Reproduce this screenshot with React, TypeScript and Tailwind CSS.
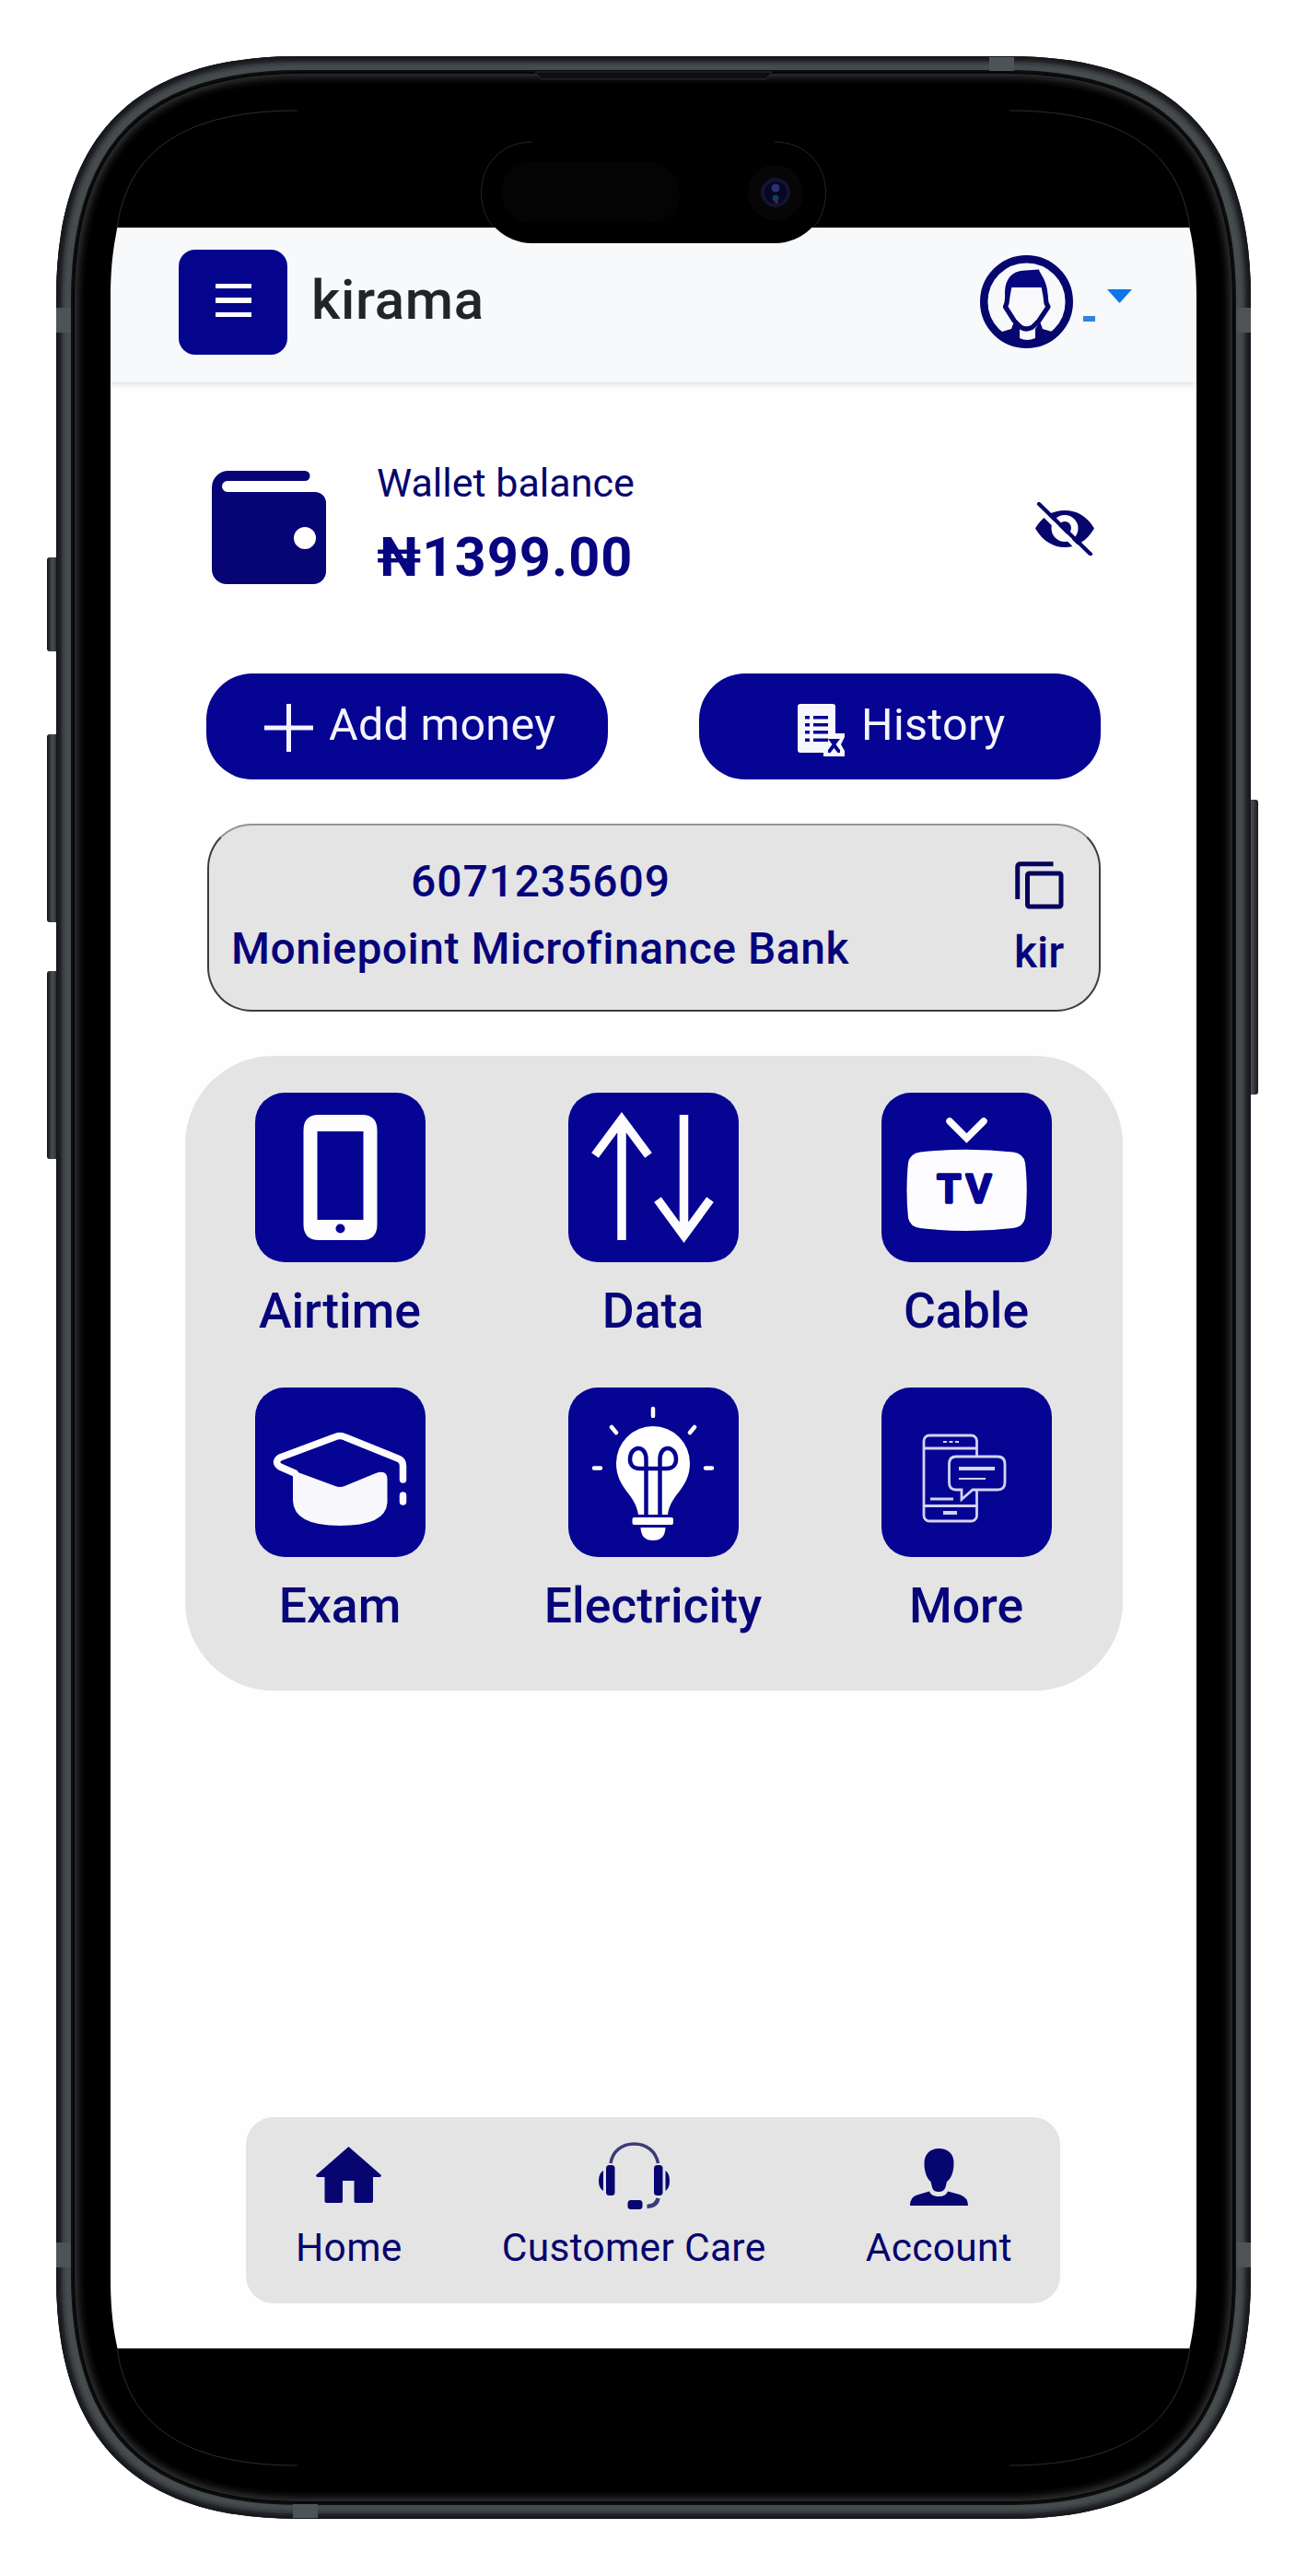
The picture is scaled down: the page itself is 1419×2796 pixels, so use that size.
import type { ReactNode } from "react";

const NAVY = "#060492";

/** Continuous-curvature rounded rectangle: l = corner length, c = bezier handle offset. */
function squircle(x0: number, y0: number, x1: number, y1: number, l: number, c: number) {
  return [
    `M${x0 + l} ${y0}`,
    `H${x1 - l}`,
    `C${x1 - c} ${y0} ${x1} ${y0 + c} ${x1} ${y0 + l}`,
    `V${y1 - l}`,
    `C${x1} ${y1 - c} ${x1 - c} ${y1} ${x1 - l} ${y1}`,
    `H${x0 + l}`,
    `C${x0 + c} ${y1} ${x0} ${y1 - c} ${x0} ${y1 - l}`,
    `V${y0 + l}`,
    `C${x0} ${y0 + c} ${x0 + c} ${y0} ${x0 + l} ${y0}Z`,
  ].join(" ");
}

const BODY = squircle(61, 61, 1358, 2734, 262, 86);
const INNER = squircle(79, 78, 1340, 2717, 248, 79);
const SCREEN = squircle(120, 120, 1299, 2676, 203, 61);

function PhoneFrame() {
  return (
    <svg className="pointer-events-none absolute inset-0" width="1419" height="2796" viewBox="0 0 1419 2796" fill="none">
      <defs>
        <clipPath id="body"><path d={BODY} /></clipPath>
        <clipPath id="ring"><path d={`${INNER} ${SCREEN}`} clipRule="evenodd" /></clipPath>
        <filter id="soft" x="-5%" y="-5%" width="110%" height="110%"><feGaussianBlur stdDeviation="5" /></filter>
        <filter id="edge" x="-5%" y="-5%" width="110%" height="110%"><feGaussianBlur stdDeviation="2.5" /></filter>
        <linearGradient id="btn" x1="0" x2="1"><stop offset="0" stopColor="#111314" /><stop offset=".4" stopColor="#4a4e50" /><stop offset="1" stopColor="#17191a" /></linearGradient>
      </defs>
      {[[605, 102], [797, 204], [1054, 204]].map(([y, h]) => (
        <rect key={y} x="51" y={y} width="14" height={h} rx="3" fill="url(#btn)" />
      ))}
      <rect x="1354" y="868" width="12" height="320" rx="3" fill="url(#btn)" />
      <path d={`${BODY} ${SCREEN}`} fill="#000" fillRule="evenodd" />
      <g clipPath="url(#body)">
        <path d={`${BODY} ${INNER}`} fill="#464b4d" fillRule="evenodd" />
        <path d={BODY} stroke="#15181a" strokeWidth="12" filter="url(#edge)" />
        <path d={INNER} stroke="#0c0d0e" strokeWidth="4" />
      </g>
      <g fill="#4e5455">
        <rect x="61" y="334" width="16" height="27" />
        <rect x="1342" y="334" width="16" height="27" />
        <rect x="61" y="2434" width="16" height="27" />
        <rect x="1342" y="2434" width="16" height="27" />
        <rect x="1074" y="62" width="27" height="15" />
        <rect x="318" y="2718" width="27" height="15" />
      </g>
      <g clipPath="url(#ring)">
        <path d={INNER} stroke="#3a3a3a" strokeWidth="10" filter="url(#soft)" />
        <path d={INNER} stroke="#050505" strokeWidth="4" />
      </g>
      <path d="M581 78L587 86H832L838 78Z" fill="#0e0e0e" stroke="#2c2c2c" />
      <g stroke="#2e2e2e" strokeWidth="1">
        <path d="M127 247C137 179 181 120 323 120" />
        <path d="M1292 247C1282 179 1238 120 1096 120" />
        <path d="M127 2549C137 2617 181 2676 323 2676" />
        <path d="M1292 2549C1282 2617 1238 2676 1096 2676" />
      </g>
      <rect x="522.5" y="154" width="374" height="110" rx="55" fill="#000" />
      <path d="M578 154C545 154 522.5 178 522.5 209C522.5 225 528 237 535 246M841 154C874 154 896.5 178 896.5 209C896.5 225 891 237 884 246" stroke="#262626" />
      <rect x="544" y="176" width="194" height="66" rx="33" fill="#040404" />
      <circle cx="842" cy="209" r="30" fill="#080509" />
      <circle cx="842" cy="209" r="16" fill="#14142e" />
      <circle cx="842" cy="209" r="12" fill="#060625" />
      <circle cx="842" cy="204" r="4.5" fill="#2c2f70" />
      <circle cx="842" cy="215" r="3.5" fill="#12404c" />
      <circle cx="843" cy="219" r="2" fill="#4d1a5c" />
    </svg>
  );
}

function AvatarIcon() {
  return (
    <svg width="101" height="101" viewBox="0 0 101 101" fill="none">
      <defs><clipPath id="avatar"><circle cx="50.5" cy="50.5" r="48" /></clipPath></defs>
      <g clipPath="url(#avatar)">
        <path d="M14 90L24 83L34 80L37 72L43 80V90C48 92.500 54 92.500 60 90V80L65 72L68 80L78 83L87 90L70 101H30Z" fill="#06066f" />
      </g>
      <path d="M32 33L30 44L29 52L27.500 56L37 71L44 78Q50 82 57 78L64 71L74 56L72 52L71 44L69 33" fill="#fafafd" stroke="#06066f" strokeWidth="5.200" strokeLinejoin="round" />
      <path d="M27.500 48C25 28 33 16.500 50 16.500L64 15.500C65 21 74.500 28 73.500 48L67 35H34Z" fill="#06067e" />
      <circle cx="50.5" cy="50.5" r="46.300" stroke="#06066f" strokeWidth="8.400" />
    </svg>
  );
}

function Header() {
  return (
    <header className="flex h-[168px] shrink-0 items-start bg-[#f8f9fb] pl-[74px] pr-[70px] shadow-[0_2px_6px_rgba(0,0,0,0.14)]">
      <button className="mt-[24px] flex h-[114px] w-[118px] flex-col items-center justify-center gap-[10px] rounded-[18px] bg-[#04048c] pb-[4px]">
        <span className="h-[5.500px] w-[39px] bg-white" />
        <span className="h-[5.500px] w-[39px] bg-white" />
        <span className="h-[5.500px] w-[39px] bg-white" />
      </button>
      <h1 className="ml-[26px] mt-[44px] whitespace-nowrap text-[60px] font-medium leading-[70px] tracking-[0.7px] text-[#212529]">kirama</h1>
      <div className="ml-auto flex items-start">
        <div className="mt-[30px]"><AvatarIcon /></div>
        <span className="ml-[11px] mt-[96px] h-[6px] w-[13px] bg-[#2f86dc]" />
        <svg className="ml-[13px] mt-[67px]" width="27" height="15" viewBox="0 0 27 15"><path d="M0 0H27L13.500 15Z" fill="#0f74ee" /></svg>
      </div>
    </header>
  );
}

function WalletIcon() {
  return (
    <svg width="124" height="123" viewBox="0 0 124 123">
      <path fillRule="evenodd" fill="#070575" d="M18 0H101A5.500 5.500 0 0 1 101 11H17A6 6 0 0 0 17 23H112A12 12 0 0 1 124 35V109A14 14 0 0 1 110 123H16A16 16 0 0 1 0 107V18A18 18 0 0 1 18 0ZM101 61A12 12 0 1 0 101 85A12 12 0 1 0 101 61Z" />
    </svg>
  );
}

function EyeOffIcon() {
  return (
    <svg width="64" height="58" viewBox="0 0 64 58" fill="none">
      <path fillRule="evenodd" fill="#07046c" d="M0 28.500C8 15 19 9 32 9S56 15 64 28.500C56 42 45 49 32 49S8 42 0 28.500ZM32 14A14.500 14.500 0 1 0 32 43A14.500 14.500 0 1 0 32 14Z" />
      <circle cx="32" cy="28" r="7" fill="#07046c" />
      <path d="M0.500 4.500L57 61" stroke="#fdfdfd" strokeWidth="5" />
      <path d="M4 2L60 56.500" stroke="#07046c" strokeWidth="4.200" strokeLinecap="round" />
    </svg>
  );
}

function HistoryIcon() {
  return (
    <svg width="51" height="57" viewBox="0 0 51 57" fill="none">
      <path fill="#f7f7ff" d="M3 0H38Q41 0 41 3V32H51V36L47 44L51 51V57H28V53H3Q0 53 0 50V3Q0 0 3 0Z" />
      <g fill={NAVY}>
        {[13, 21, 29, 37.5].map((y) => (
          <path key={y} d={`M8 ${y}h5v3.500h-5zM17 ${y}h16v3.500h-16z`} />
        ))}
        <path d="M33 38H46L41.500 44L46 50V53H43.500L39.500 48L35.500 53H33V50L37.500 44Z" />
      </g>
    </svg>
  );
}

function Wallet() {
  return (
    <section className="ml-[110px] mt-[84px] flex h-[141px] w-[958px] items-start text-[#07056e]">
      <div className="mt-[12px]"><WalletIcon /></div>
      <div className="ml-[55px] whitespace-nowrap">
        <p className="text-[43px] leading-[50px]">Wallet balance</p>
        <p className="mt-[21px] text-[59.5px] font-bold leading-[70px] tracking-[1px] text-[#070580]">₦1399.00</p>
      </div>
      <div className="ml-auto mt-[46px]"><EyeOffIcon /></div>
    </section>
  );
}

function Actions() {
  return (
    <section className="ml-[104px] mt-[91px] flex w-[971px] justify-between whitespace-nowrap text-[48.5px] leading-[56px] tracking-[0.3px] text-[#f4f4ff]">
      <button className="flex h-[115px] w-[436px] items-center rounded-[50px] bg-[#060492] pb-[4px] pl-[63px]">
        <svg className="mt-[7px]" width="53" height="52" viewBox="0 0 53 52"><path d="M26.500 0V52M0 26H53" stroke="#f4f4ff" strokeWidth="5" /></svg>
        <span className="ml-[17px]">Add money</span>
      </button>
      <button className="flex h-[115px] w-[436px] items-center rounded-[50px] bg-[#060492] pb-[4px] pl-[107px]">
        <span className="mt-[12px]"><HistoryIcon /></span>
        <span className="ml-[18px]">History</span>
      </button>
    </section>
  );
}

function AccountCard() {
  return (
    <section className="ml-[105px] mt-[48px] flex h-[204px] w-[970px] items-start justify-between whitespace-nowrap rounded-[48px] border-2 border-[#3c3c3c] border-t-[#929292] bg-[#e4e4e4] pl-[24px] pr-[38px] text-[48px] font-medium text-[#06047a]">
      <div className="pt-[24px] text-center leading-[73px]">
        <p className="ml-[1px] tracking-[0.9px]">6071235609</p>
        <p className="tracking-[0.5px]">Moniepoint Microfinance Bank</p>
      </div>
      <div className="flex w-[53px] flex-col pt-[39px]">
        <svg width="53" height="52" viewBox="0 0 53 52" fill="none" stroke="#06045e" strokeWidth="5">
          <path d="M2.750 41V6Q2.750 2.750 6 2.750H41.500" />
          <rect x="13.500" y="13" width="36.500" height="36" rx="2" />
        </svg>
        <p className="-ml-[1px] mt-[17px] leading-[60px]">kir</p>
      </div>
    </section>
  );
}

const services: { label: string; icon: ReactNode }[] = [
  {
    label: "Airtime",
    icon: (
      <>
        <path fillRule="evenodd" fill="#fdfdff" d="M69 24H116Q132.500 24 132.500 41V143Q132.500 160 116 160H69Q52.500 160 52.500 143V41Q52.500 24 69 24ZM67.500 42V138H117.500V42Z" />
        <circle cx="92.500" cy="147.500" r="5" fill={NAVY} />
      </>
    ),
  },
  {
    label: "Data",
    icon: <path d="M58 160V28M29 68L58 29L87 68M125.500 24V156M97 116L125.500 155L154 116" stroke="#fdfdff" strokeWidth="9.500" />,
  },
  {
    label: "Cable",
    icon: (
      <>
        <path d="M74 31L92.500 49.500L111 31" stroke="#fdfdff" strokeWidth="7.500" strokeLinecap="round" />
        <path d="M42 64.500Q92.500 59 143 64.500Q154 66 156 76Q159.500 106 156 136Q154 145.500 143 147Q92.500 153 42 147Q31 145.500 29 136Q26 106 29 76Q31 66 42 64.500Z" fill="#fdfdff" />
        <text x="60.500" y="119" fontSize="42" fontWeight="500" letterSpacing="5.500" fill={NAVY} stroke={NAVY} strokeWidth="3.500" strokeLinejoin="round">TV</text>
      </>
    ),
  },
  {
    label: "Exam",
    icon: (
      <>
        <path d="M43 93L27 86Q20 81 27 76L86 54Q92 51 98 54L155 77Q160.500 79 160.500 85V100M160.500 117V124" stroke="#fdfdff" strokeWidth="7.500" strokeLinecap="round" strokeLinejoin="round" />
        <path d="M41 90L87 107Q92 109 97 107L131 93Q143 89 143.500 99V125Q142 150 92 150Q42 150 41 123Z" fill="#f8f8fc" />
      </>
    ),
  },
  {
    label: "Electricity",
    icon: (
      <>
        <path d="M76 138C73 115 52 110 52 82A40 40 0 0 1 132 82C132 110 111 115 108 138Z" fill="#fff" />
        <path d="M84.500 138V78C84.500 61 67 63 67 78C67 84 71 88 77 88H107C113 88 117 84 117 78C117 63 99.500 61 99.500 78V138" stroke={NAVY} strokeWidth="4.500" />
        <rect x="69.500" y="141" width="44.500" height="8" rx="2" fill="#fff" />
        <path d="M78.500 152H105.500Q105 166 92 166Q79 166 78.500 152Z" fill="#fff" />
        <path d="M92 23V31M47 43L52 49M137 43L132 49M28 87.500H35M149 87.500H156" stroke="#fff" strokeWidth="4.500" strokeLinecap="round" />
      </>
    ),
  },
  {
    label: "More",
    icon: (
      <g stroke="#d3d3f2" strokeWidth="2.800">
        <rect x="46" y="52" width="57.500" height="93" rx="6" />
        <path d="M46 66H103M46 128.500H103M53 121H78" />
        <path d="M67 59H84" strokeDasharray="4 2.500" strokeWidth="2" />
        <path d="M67 136H82" strokeWidth="4" />
        <path d="M81 75H126Q134 75 134 83V103Q134 111 126 111H99L87 121.500V111H81Q73.500 111 73.500 103V83Q73.500 75 81 75Z" fill={NAVY} />
        <path d="M84 88H123" strokeWidth="4" />
        <path d="M84 99H113" strokeWidth="2" />
      </g>
    ),
  },
];

function Services() {
  return (
    <section className="ml-[81px] mt-[48px] h-[689px] w-[1018px] rounded-[96px] bg-[#e4e4e4] pt-[40px]">
      <div className="-ml-[2px] grid w-[1020px] grid-cols-3 gap-y-[51px]">
        {services.map((s) => (
          <div key={s.label} className="flex flex-col items-center">
            <div className="h-[184px] w-[185px] overflow-hidden rounded-[32px] bg-[#060492]">
              <svg width="185" height="184" viewBox="0 0 185 184" fill="none">{s.icon}</svg>
            </div>
            <p className="mt-[21px] whitespace-nowrap text-[53.5px] font-medium leading-[64px] text-[#07057a]">{s.label}</p>
          </div>
        ))}
      </div>
    </section>
  );
}

function NavItem({ label, children }: { label: string; children: ReactNode }) {
  return (
    <div className="flex flex-col items-center whitespace-nowrap">
      <div className="h-[117px]">{children}</div>
      <p className="text-[42.5px] leading-[50px] tracking-[0.3px]">{label}</p>
    </div>
  );
}

function BottomNav() {
  return (
    <nav className="ml-[147px] mt-[463px] flex h-[202px] w-[884px] items-start justify-between rounded-[30px] bg-[#e4e4e4] pl-[54px] pr-[52px] text-[#06056e]">
      <NavItem label="Home">
        <svg className="mt-[32px]" width="71" height="62" viewBox="0 0 71 62" fill="#070570">
          <path d="M35.500 0L71 31Q71 33 69 33H62V59Q62 61 60 61H43Q41.500 61 41.500 59V37H29V59Q29 61 27.500 61H11.500Q9.500 61 9.500 59V33H2Q0 33 0 31Z" />
        </svg>
      </NavItem>
      <NavItem label="Customer Care">
        <svg className="mt-[27px]" width="77" height="74" viewBox="0 0 77 74" fill="none">
          <path d="M13 23C15 10 25 2 38.500 2S62 10 64.500 23" stroke="#3d3a78" strokeWidth="3.500" />
          <path d="M64.500 61Q63 69.500 52.500 70" stroke="#3d3a78" strokeWidth="4.500" />
          <g fill="#070570">
            <rect x="8" y="25" width="9.500" height="33" rx="3.500" />
            <rect x="60" y="25" width="9.500" height="33" rx="3.500" />
            <path d="M5 31V53Q0 50 0 42T5 31ZM72.500 31V53Q77 50 77 42T72.500 31Z" />
            <rect x="31.500" y="63" width="16" height="10" rx="3.500" />
          </g>
        </svg>
      </NavItem>
      <NavItem label="Account">
        <svg className="mt-[34px]" width="63" height="62" viewBox="0 0 63 62" fill="#070570">
          <path d="M31.500 0C41 0 48 6 47.500 16C47.500 27 44 33 40 36L38.500 42Q37 47 31 47T24 42L22.500 36C19 33 15.500 27 15.500 16C15.500 6 22 0 31.500 0Z" />
          <path d="M0 62Q0 52 9 50L21 46.500Q23 52 31 52T41 46.500L54 50Q63 53 63 62Z" />
        </svg>
      </NavItem>
    </nav>
  );
}

export default function App() {
  return (
    <div className="relative h-[2796px] w-[1419px] overflow-hidden bg-white pl-[120px] pt-[120px] font-['Roboto',sans-serif]">
      <main className="h-[2556px] w-[1179px] overflow-hidden rounded-[110px] bg-black pt-[127px]">
        <div className="flex h-[2302px] flex-col bg-[#fefefe]">
          <Header />
          <Wallet />
          <Actions />
          <AccountCard />
          <Services />
          <BottomNav />
        </div>
      </main>
      <PhoneFrame />
    </div>
  );
}
